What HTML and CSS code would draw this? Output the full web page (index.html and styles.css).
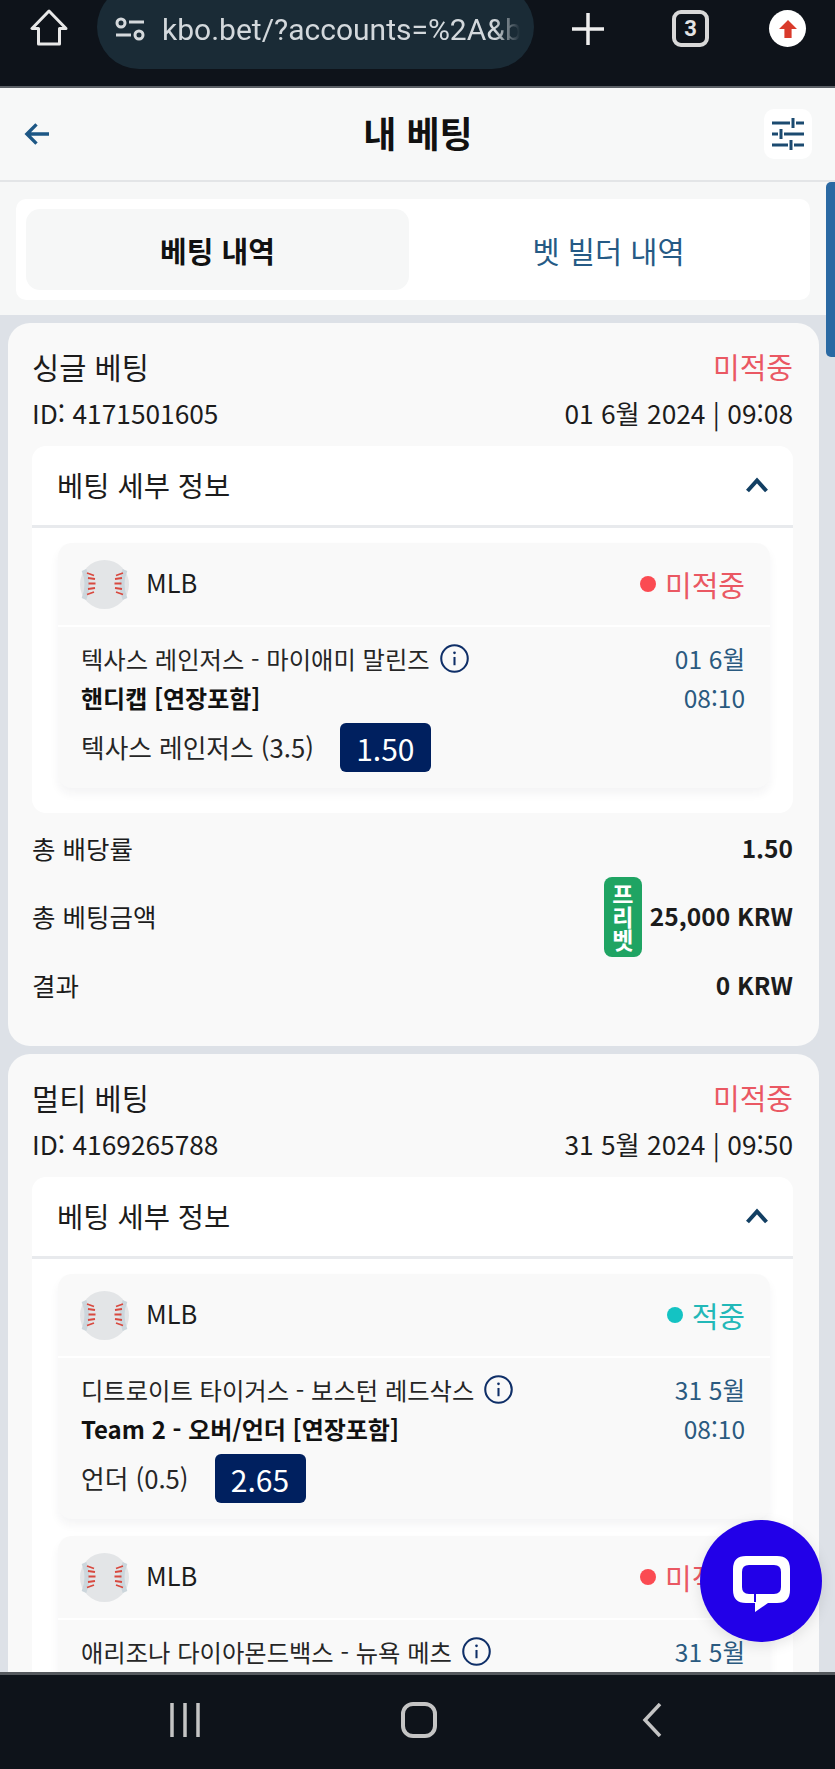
FILE: index.html
```html
<!DOCTYPE html>
<html lang="ko">
<head>
    <meta charset="UTF-8">
    <meta name="viewport" content="width=device-width, initial-scale=1.0">
    <title>내 베팅</title>
    <link rel="stylesheet" href="styles.css">
</head>
<body>

<svg class="sprites" width="0" height="0">
    <symbol id="ball" viewBox="0 0 49 49">
        <circle cx="24.5" cy="24.5" r="24.5" fill="#e3e5e7"/>
        <path d="M4 10q6 14 0 29M45 10q-6 14 0 29" fill="none" stroke="#ccd6dc" stroke-width="5"/>
        <path d="M7 13l7 2.500M8 18l7 1M8.500 23.500h7M8 29l7-1M7 34.500l7-2.500M43 13l-7 2.500M42 18l-7 1M41.500 23.500h-7M42 29l-7-1M43 34.500l-7-2.500" fill="none" stroke="#d8493f" stroke-width="1.800"/>
    </symbol>
    <symbol id="info" viewBox="0 0 28 28">
        <circle cx="14" cy="14" r="12.800" fill="none" stroke="#0f2f68" stroke-width="2"/>
        <path d="M14 12.500v8" stroke="#0f2f68" stroke-width="2"/>
        <circle cx="14" cy="8.500" r="1.300" fill="#0f2f68"/>
    </symbol>
    <symbol id="chevron" viewBox="0 0 24 16">
        <path d="M2.500 14L12 3.500L21.500 14" fill="none" stroke="#123f63" stroke-width="4"/>
    </symbol>
</svg>

<div class="phone">
    <!-- barra do navegador -->
    <div class="browserBar">
        <svg class="homeIcon" viewBox="0 0 38 38"><path d="M19 2L2 19.500H8.500V35H29.500V19.500H36Z" fill="none" stroke="#e8e8e8" stroke-width="3" stroke-linejoin="round"/></svg>
        <div class="urlPill">
            <svg class="siteIcon" viewBox="0 0 30 24"><g fill="none" stroke="#d5d9dc" stroke-width="3"><circle cx="6" cy="6" r="4"/><circle cx="24" cy="18" r="4"/><path d="M14 5H29M1 18H16"/></g></svg>
            <span class="urlText">kbo.bet/?accounts=%2A&amp;bo</span>
        </div>
        <svg class="plusIcon" viewBox="0 0 34 34"><path d="M17 1V33M1 17H33" stroke="#eee" stroke-width="3.500"/></svg>
        <div class="tabCount">3</div>
        <div class="updateDot"><svg viewBox="0 0 20 20" width="18" height="18"><path d="M10 0L20 10H14V20H6V10H0Z" fill="#d93a2b"/></svg></div>
    </div>

    <header class="appHeader">
        <div class="backBtn">
            <svg class="backIcon" viewBox="0 0 26 24"><path d="M13 2L3 12L13 22M3 12H26" fill="none" stroke="#1d5785" stroke-width="3.500"/></svg>
        </div>
        <h1>내 베팅</h1>
        <div class="filterBtn">
            <svg viewBox="0 0 32 32" width="32" height="32"><path d="M0 5H18M24 5H32M0 16H6M12 16H32M0 27H16M22 27H32M21 0V10M9 11V21M19 22V32" fill="none" stroke="#1b4a70" stroke-width="3"/></svg>
        </div>
    </header>

    <div class="content">
        <div class="tabsArea">
            <div class="tabs">
                <div class="tab tabActive">베팅 내역</div>
                <div class="tab">벳 빌더 내역</div>
            </div>
        </div>

        <div class="cards">
            <section class="betCard">
                <div class="row titleRow"><span>싱글 베팅</span><span class="lost">미적중</span></div>
                <div class="row metaRow"><span>ID: 4171501605</span><span>01 6월 2024 | 09:08</span></div>
                <div class="panel">
                    <div class="panelHead"><span>베팅 세부 정보</span><svg class="chevron"><use href="#chevron"/></svg></div>
                    <div class="panelBody">
                        <div class="match">
                            <div class="matchHead">
                                <svg class="ball"><use href="#ball"/></svg>
                                <span class="league">MLB</span>
                                <span class="dot dotLost"></span><span class="lost">미적중</span>
                            </div>
                            <div class="matchBody">
                                <div class="row line">
                                    <span class="teams">텍사스 레인저스 - 마이애미 말린즈 <svg class="info"><use href="#info"/></svg></span>
                                    <span class="when">01 6월</span>
                                </div>
                                <div class="row line boldLine">
                                    <b>핸디캡 [연장포함]</b>
                                    <span class="when">08:10</span>
                                </div>
                                <div class="pick"><span>텍사스 레인저스 (3.5)</span><span class="odd">1.50</span></div>
                            </div>
                        </div>
                    </div>
                </div>
                <div class="row sumRow first"><span>총 배당률</span><b>1.50</b></div>
                <div class="row sumRow tall">
                    <span>총 베팅금액</span>
                    <span class="amount"><span class="freeBadge">프리벳</span><b>25,000 KRW</b></span>
                </div>
                <div class="row sumRow"><span>결과</span><b>0 KRW</b></div>
            </section>

            <section class="betCard">
                <div class="row titleRow"><span>멀티 베팅</span><span class="lost">미적중</span></div>
                <div class="row metaRow"><span>ID: 4169265788</span><span>31 5월 2024 | 09:50</span></div>
                <div class="panel">
                    <div class="panelHead"><span>베팅 세부 정보</span><svg class="chevron"><use href="#chevron"/></svg></div>
                    <div class="panelBody">
                        <div class="match">
                            <div class="matchHead">
                                <svg class="ball"><use href="#ball"/></svg>
                                <span class="league">MLB</span>
                                <span class="dot dotWon"></span><span class="won">적중</span>
                            </div>
                            <div class="matchBody">
                                <div class="row line">
                                    <span class="teams">디트로이트 타이거스 - 보스턴 레드삭스 <svg class="info"><use href="#info"/></svg></span>
                                    <span class="when">31 5월</span>
                                </div>
                                <div class="row line boldLine">
                                    <b>Team 2 - 오버/언더 [연장포함]</b>
                                    <span class="when">08:10</span>
                                </div>
                                <div class="pick"><span>언더 (0.5)</span><span class="odd">2.65</span></div>
                            </div>
                        </div>
                        <div class="match">
                            <div class="matchHead">
                                <svg class="ball"><use href="#ball"/></svg>
                                <span class="league">MLB</span>
                                <span class="dot dotLost"></span><span class="lost">미적중</span>
                            </div>
                            <div class="matchBody">
                                <div class="row line">
                                    <span class="teams">애리조나 다이아몬드백스 - 뉴욕 메츠 <svg class="info"><use href="#info"/></svg></span>
                                    <span class="when">31 5월</span>
                                </div>
                            </div>
                        </div>
                    </div>
                </div>
            </section>
        </div>

        <div class="scrollThumb"></div>
    </div>

    <button class="chatBtn">
        <svg viewBox="0 0 57 56" width="57" height="56"><path fill-rule="evenodd" d="M13 0H44Q57 0 57 13V34Q57 47 44 47H35L22 56V47H13Q0 47 0 34V13Q0 0 13 0ZM16 9Q9 9 9 16V31Q9 38 16 38H21V46H23V38H41Q48 38 48 31V16Q48 9 41 9Z" fill="#fff"/></svg>
    </button>

    <nav class="navBar">
        <svg class="navBars" viewBox="0 0 30 34"><path d="M2 0V34M15 0V34M28 0V34" stroke="#c4c4c4" stroke-width="3.500"/></svg>
        <div class="navHome"></div>
        <svg class="navBack" viewBox="0 0 20 34"><path d="M18 1L3 17L18 33" fill="none" stroke="#c4c4c4" stroke-width="3.500"/></svg>
    </nav>
</div>

</body>
</html>
```

FILE: styles.css
```css
*{
    box-sizing: border-box;
}

body{
    margin: 0;
    padding: 0;
    background-color: #0e131a;
    font-family: "Noto Sans CJK KR", "Noto Sans", sans-serif;
    color: #1c1c1c;
}

.sprites{
    position: absolute;
}

.phone{
    position: relative;
    width: 835px;
    height: 1769px;
    display: flex;
    flex-direction: column;
    overflow: hidden;
}

/* barra do navegador */
.browserBar{
    height: 88px;
    flex-shrink: 0;
    background-color: #0e131a;
    border-bottom: 2px solid #5b6066;
    overflow: hidden;
    display: flex;
    align-items: flex-start;
}

.homeIcon{
    width: 38px;
    height: 38px;
    margin: 9px 0 0 30px;
}

.urlPill{
    width: 437px;
    height: 84px;
    margin: -15px 0 0 29px;
    padding: 4px 14px 0 18px;
    border-radius: 42px;
    background-color: #1a2b36;
    display: flex;
    align-items: center;
    gap: 17px;
    overflow: hidden;
}

.siteIcon{
    width: 30px;
    height: 24px;
    flex-shrink: 0;
}

.urlText{
    font-family: Roboto, sans-serif;
    font-size: 30px;
    color: #d3d8dc;
    white-space: nowrap;
    overflow: hidden;
    -webkit-mask-image: linear-gradient(to right, black 93%, transparent);
    mask-image: linear-gradient(to right, black 93%, transparent);
}

.plusIcon{
    width: 34px;
    height: 34px;
    margin: 12px 0 0 37px;
}

.tabCount{
    width: 37px;
    height: 37px;
    margin: 10px 0 0 67px;
    border: 4px solid #d8d8d8;
    border-radius: 9px;
    color: #e4e4e4;
    font-family: Roboto, sans-serif;
    font-size: 22px;
    font-weight: 700;
    display: flex;
    align-items: center;
    justify-content: center;
}

.updateDot{
    width: 37px;
    height: 37px;
    margin: 10px 0 0 60px;
    border-radius: 50%;
    background-color: white;
    display: flex;
    align-items: center;
    justify-content: center;
}

/* topo do app */
.appHeader{
    height: 94px;
    flex-shrink: 0;
    background-color: #f7f8f8;
    border-bottom: 2px solid #e3e5e7;
    padding: 0 23px 0 24px;
    display: flex;
    align-items: center;
    justify-content: space-between;
}

.appHeader h1{
    margin: 0 0 4px;
    font-size: 36px;
    font-weight: 700;
    color: #111;
}

.backBtn{
    width: 48px;
}

.backIcon{
    display: block;
    width: 25px;
    height: 24px;
}

.filterBtn{
    width: 48px;
    height: 50px;
    border-radius: 10px;
    background-color: white;
    display: flex;
    align-items: center;
    justify-content: center;
}

.content{
    position: relative;
    flex: 1;
    overflow: hidden;
    background-color: #dde1e7;
}

.tabsArea{
    height: 133px;
    padding: 17px 25px 0 16px;
    background-color: #f6f7f7;
}

.tabs{
    height: 101px;
    padding: 10px;
    border-radius: 10px;
    background-color: white;
    display: flex;
}

.tab{
    width: 383px;
    border-radius: 14px;
    display: flex;
    align-items: center;
    justify-content: center;
    font-size: 29.500px;
    color: #255a85;
}

.tab + .tab{
    flex: 1;
    padding-left: 8px;
}

.tabActive{
    background-color: #f6f7f7;
    color: #111;
    font-weight: 700;
    font-size: 29px;
}

.cards{
    padding: 8px 16px 0 8px;
    display: flex;
    flex-direction: column;
    gap: 8px;
}

.scrollThumb{
    position: absolute;
    top: 0;
    right: 0;
    width: 9px;
    height: 175px;
    border-radius: 5px 0 0 5px;
    background-color: #2a69a3;
}

.betCard{
    padding: 25px 26px 42px 24px;
    border-radius: 22px;
    background-color: #f9f9f9;
}

.row{
    display: flex;
    justify-content: space-between;
    align-items: center;
}

.titleRow{
    height: 40px;
    padding-bottom: 4px;
    font-size: 29.500px;
}

.titleRow .lost{
    font-size: 29px;
}

.metaRow{
    height: 36px;
    margin-top: 7px;
    padding-bottom: 2px;
    font-size: 26.300px;
}

.lost{
    color: #ea5863;
}

.won{
    color: #22b8b8;
}

.panel{
    margin-top: 15px;
    border-radius: 14px;
    background-color: white;
}

.panelHead{
    height: 82px;
    padding: 0 24px 2px 25px;
    border-bottom: 3px solid #e8eaed;
    display: flex;
    align-items: center;
    justify-content: space-between;
    font-size: 28.500px;
}

.chevron{
    width: 24px;
    height: 16px;
}

.panelBody{
    padding: 15px 23px 25px 26px;
    display: flex;
    flex-direction: column;
    gap: 17px;
}

.match{
    border-radius: 14px;
    background-color: #f9f9f9;
    box-shadow: 0 6px 10px rgba(30, 40, 60, 0.05);
}

.matchHead{
    height: 84px;
    padding: 0 25px 0 22px;
    border-bottom: 2px solid white;
    display: flex;
    align-items: center;
    font-size: 29px;
}

.ball{
    width: 49px;
    height: 49px;
    margin-right: 17px;
}

.league{
    flex: 1;
    margin-bottom: 5px;
    font-size: 25.500px;
}

.dot{
    width: 16px;
    height: 16px;
    margin-right: 9px;
    border-radius: 50%;
}

.dotLost{
    background-color: #fb4b52;
}

.dotWon{
    background-color: #14c3c3;
}

.matchBody{
    padding: 14px 25px 16px 23px;
}

.line{
    height: 36px;
    padding-bottom: 2px;
    font-size: 24.300px;
}

.boldLine{
    margin-top: 4px;
    padding-bottom: 4px;
    font-size: 24px;
}

.teams{
    display: flex;
    align-items: center;
    gap: 10px;
    color: #262626;
}

.info{
    width: 29px;
    height: 29px;
}

.when{
    color: #2a5a80;
    font-size: 24.500px;
}

.boldLine b{
    color: #111;
}

.pick{
    margin-top: 6px;
    display: flex;
    align-items: center;
    gap: 26px;
    font-size: 25.700px;
}

.pick span:first-child{
    margin-bottom: 2px;
    color: #262626;
}

.odd{
    width: 91px;
    height: 49px;
    border-radius: 6px;
    background-color: #00205f;
    color: white;
    font-size: 30px;
    display: flex;
    align-items: center;
    justify-content: center;
}

.sumRow{
    height: 36px;
    margin-top: 11px;
    padding-bottom: 4px;
    font-size: 25.500px;
}

.sumRow b{
    font-size: 24.500px;
}

.first{
    margin-top: 18px;
}

.tall{
    height: 80px;
    margin-top: 10px;
    padding-bottom: 0;
}

.tall > span:first-child,
.amount b{
    margin-bottom: 4px;
}

.amount{
    display: flex;
    align-items: center;
    gap: 8px;
}

.freeBadge{
    width: 38px;
    height: 80px;
    border-radius: 8px;
    background-color: #1fa463;
    color: white;
    font-size: 23px;
    font-weight: 700;
    line-height: 38px;
    writing-mode: vertical-rl;
    text-orientation: upright;
    text-align: center;
}

/* botao de chat por cima do conteudo */
.chatBtn{
    position: absolute;
    left: 700px;
    top: 1520px;
    width: 122px;
    height: 122px;
    padding: 5px 0 0 0;
    border: none;
    border-radius: 50%;
    background-color: #2200e8;
    display: flex;
    align-items: center;
    justify-content: center;
    box-shadow: 0 4px 14px rgba(0, 0, 0, 0.1);
}

.navBar{
    height: 97px;
    flex-shrink: 0;
    background-color: #0e131a;
    border-top: 3px solid #55595e;
    display: flex;
    align-items: center;
    justify-content: space-between;
    padding: 0 173px 4px 170px;
}

.navBars{
    width: 30px;
    height: 34px;
}

.navHome{
    width: 36px;
    height: 36px;
    margin-right: 4px;
    border: 4px solid #c4c4c4;
    border-radius: 12px;
}

.navBack{
    width: 20px;
    height: 34px;
}
```
